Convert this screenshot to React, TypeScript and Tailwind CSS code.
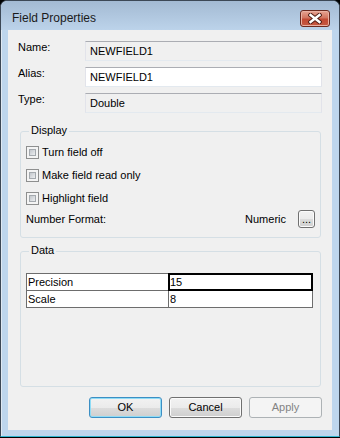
import React from 'react';

const btnBase =
  'w-[73px] h-[21px] rounded-[3px] border flex items-center justify-center leading-none';
const btnNormal =
  'border-[#707070] bg-[linear-gradient(#f2f2f2,#ebebeb_50%,#dddddd_50%,#cfcfcf)] shadow-[inset_0_0_0_1px_#fbfbfb]';

function Checkbox({ label }: { label: string }) {
  return (
    <div className="flex items-center gap-[3px] h-[13px]">
      <div className="w-[13px] h-[13px] border border-[#8e8f8f] bg-[#f4f4f4] p-[2px]">
        <div className="w-full h-full border border-[#a4a9ae] bg-[linear-gradient(135deg,#c3c7cc,#eceef0)]" />
      </div>
      <span className="leading-[13px]">{label}</span>
    </div>
  );
}

function FieldRow({ label, value, readOnly }: { label: string; value: string; readOnly?: boolean }) {
  return (
    <div className="flex items-start h-[20px]">
      <span className="w-[67px] leading-[13px]">{label}</span>
      <div
        className={`flex-1 h-[20px] border border-t-[#abadb3] border-x-[#e2e3ea] border-b-[#e3e9ef] px-[4px] flex items-center ${
          readOnly ? 'bg-[#f0f0f0]' : 'bg-white'
        }`}
      >
        {value}
      </div>
    </div>
  );
}

function GroupBox({ title, className, children }: { title: string; className: string; children: React.ReactNode }) {
  return (
    <div className={`relative mx-[11px] ml-[12px] border border-[#d5dfe5] rounded-[3px] ${className}`}>
      <span className="absolute left-[8px] top-[-8px] px-[2px] bg-[#f0f0f0] leading-[13px]">{title}</span>
      {children}
    </div>
  );
}

export default function App() {
  return (
    <div className="w-[340px] h-[438px] bg-black font-['Liberation_Sans',Arial,sans-serif] text-[11px] text-black">
      <div className="flex flex-col w-[340px] h-[437px] rounded-t-[7px] border border-[#3c4856] border-b-[#2fb5cf] bg-[#bed6ed] shadow-[inset_1px_1px_0_#dfe9f3]">
        {/* title bar */}
        <div className="flex items-start h-[29px] rounded-t-[6px] bg-[linear-gradient(#a3bad3,#bcd3ea)]">
          <span className="ml-[11px] mt-[10px] text-[12px] leading-[14px] text-[#1a1a1a]">Field Properties</span>
          <div className="ml-auto mr-[9px] mt-[9px] w-[30px] h-[17px] rounded-[3px] border border-[#6b2a20] bg-[linear-gradient(#e7a493,#d27560_45%,#c24a34_55%,#c55a43)] shadow-[inset_0_0_0_1px_#eab1a3] flex items-center justify-center">
            <svg width="14" height="11" viewBox="0 0 14 11">
              <path d="M2.5 2 L11.5 9 M11.5 2 L2.5 9" stroke="#4e1d15" strokeWidth="4.4" strokeLinecap="square" />
              <path d="M2.5 2 L11.5 9 M11.5 2 L2.5 9" stroke="#ffffff" strokeWidth="2.4" strokeLinecap="square" />
            </svg>
          </div>
        </div>

        {/* client area */}
        <div className="mx-[7px] h-[400px] bg-[#f0f0f0] flex flex-col">
          <div className="flex flex-col gap-[6px] pt-[11px] pl-[10px] pr-[10px]">
            <FieldRow label="Name:" value="NEWFIELD1" readOnly />
            <FieldRow label="Alias:" value="NEWFIELD1" />
            <FieldRow label="Type:" value="Double" readOnly />
          </div>

          <GroupBox title="Display" className="mt-[18px] h-[107px] pt-[14px] pl-[5px] pr-[5px]">
            <div className="flex flex-col gap-[10px]">
              <Checkbox label="Turn field off" />
              <Checkbox label="Make field read only" />
              <Checkbox label="Highlight field" />
            </div>
            <div className="flex items-center h-[18px] mt-[5px]">
              <span className="flex-1">Number Format:</span>
              <span className="mr-[12px]">Numeric</span>
              <div className={`w-[17px] h-[18px] rounded-[3px] border flex items-end justify-center pb-[2px] leading-none ${btnNormal}`}>
                ...
              </div>
            </div>
          </GroupBox>

          <GroupBox title="Data" className="mt-[13px] h-[136px] pt-[21px] pl-[5px]">
            <div className="w-[287px] border border-[#6d6d6d] bg-white">
              <div className="flex h-[17px] border-b border-[#6d6d6d]">
                <div className="w-[142px] border-r border-[#6d6d6d] pl-[1px] flex items-center">Precision</div>
                <div className="flex-1 border-2 border-black flex items-center -m-px">15</div>
              </div>
              <div className="flex h-[16px]">
                <div className="w-[142px] border-r border-[#6d6d6d] pl-[1px] flex items-center">Scale</div>
                <div className="flex-1 pl-[1px] flex items-center">8</div>
              </div>
            </div>
          </GroupBox>

          <div className="flex justify-end gap-[7px] mt-[10px] pr-[10px]">
            <div className={`${btnBase} border-[#3c8fc4] bg-[linear-gradient(#f2f2f2,#ebebeb_50%,#dddddd_50%,#cfcfcf)] shadow-[inset_0_0_0_1px_#8fdcf6]`}>
              OK
            </div>
            <div className={`${btnBase} ${btnNormal}`}>Cancel</div>
            <div className={`${btnBase} border-[#adb2b5] bg-[#f4f4f4] text-[#838383]`}>Apply</div>
          </div>
        </div>
      </div>
    </div>
  );
}
